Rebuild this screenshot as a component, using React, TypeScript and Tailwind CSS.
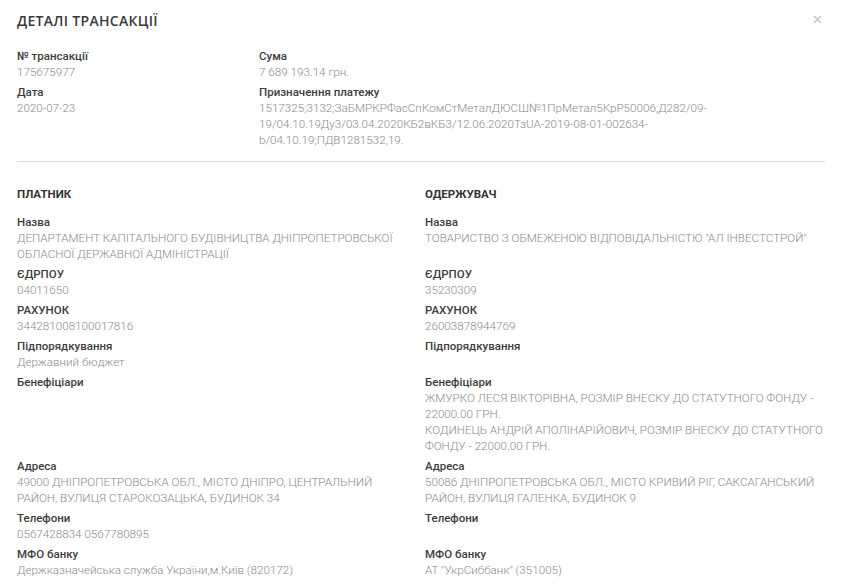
const labelFont = { fontFamily: 'Roboto, "Liberation Sans", sans-serif' };

type F = { label: string; lines?: string[] };

const Field = ({ label, lines = [] }: F) => (
  <div className="flex flex-col" style={labelFont}>
    <span className="text-[11.5px] leading-[15px] font-medium text-[#3d3d3d]">{label}</span>
    {lines.map((l, i) => (
      <span key={i} className="whitespace-nowrap text-[11.65px] leading-[16px] font-light text-[#8a8a8a]">
        {l}
      </span>
    ))}
  </div>
);

const payer: F[] = [
  { label: "Назва", lines: ["ДЕПАРТАМЕНТ КАПІТАЛЬНОГО БУДІВНИЦТВА ДНІПРОПЕТРОВСЬКОЇ", "ОБЛАСНОЇ ДЕРЖАВНОЇ АДМІНІСТРАЦІЇ"] },
  { label: "ЄДРПОУ", lines: ["04011650"] },
  { label: "РАХУНОК", lines: ["344281008100017816"] },
  { label: "Підпорядкування", lines: ["Державний бюджет"] },
  { label: "Бенефіціари" },
  { label: "Адреса", lines: ["49000 ДНІПРОПЕТРОВСЬКА ОБЛ., МІСТО ДНІПРО, ЦЕНТРАЛЬНИЙ", "РАЙОН, ВУЛИЦЯ СТАРОКОЗАЦЬКА, БУДИНОК 34"] },
  { label: "Телефони", lines: ["0567428834 0567780895"] },
  { label: "МФО банку", lines: ["Держказначейська служба України,м.Київ (820172)"] },
];

const receiver: F[] = [
  { label: "Назва", lines: ['ТОВАРИСТВО З ОБМЕЖЕНОЮ ВІДПОВІДАЛЬНІСТЮ "АЛ ІНВЕСТСТРОЙ"'] },
  { label: "ЄДРПОУ", lines: ["35230309"] },
  { label: "РАХУНОК", lines: ["26003878944769"] },
  { label: "Підпорядкування" },
  {
    label: "Бенефіціари",
    lines: [
      "ЖМУРКО ЛЕСЯ ВІКТОРІВНА, РОЗМІР ВНЕСКУ ДО СТАТУТНОГО ФОНДУ -",
      "22000.00 ГРН.",
      "КОДИНЕЦЬ АНДРІЙ АПОЛІНАРІЙОВИЧ, РОЗМІР ВНЕСКУ ДО СТАТУТНОГО",
      "ФОНДУ - 22000.00 ГРН.",
    ],
  },
  { label: "Адреса", lines: ["50086 ДНІПРОПЕТРОВСЬКА ОБЛ., МІСТО КРИВИЙ РІГ, САКСАГАНСЬКИЙ", "РАЙОН, ВУЛИЦЯ ГАЛЕНКА, БУДИНОК 9"] },
  { label: "Телефони" },
  { label: "МФО банку", lines: ['АТ "УкрСиббанк" (351005)'] },
];

const App = () => {
  return (
    <div className="min-h-[588px] w-[845px] bg-white pl-[17px] pr-[20px] pt-[10px]">
      <div className="flex h-[20px] items-center justify-between">
        <span
          className="text-[14px] font-semibold tracking-[0.3px] text-[#3a3a3a]"
          style={{ fontFamily: '"Open Sans", sans-serif' }}
        >
          ДЕТАЛІ ТРАНСАКЦІЇ
        </span>
        <svg width="9" height="9" viewBox="0 0 9 9" className="mr-[3px] -mt-[1px]">
          <path d="M1 1L8 8M8 1L1 8" stroke="#c6c6c6" strokeWidth="1.6" />
        </svg>
      </div>

      <div className="mt-[19px] grid grid-cols-[242px_1fr] gap-y-[5px]">
        <Field label="№ трансакції" lines={["175675977"]} />
        <Field label="Сума" lines={["7 689 193.14 грн."]} />
        <Field label="Дата" lines={["2020-07-23"]} />
        <Field
          label="Призначення платежу"
          lines={[
            "1517325;3132;ЗаБМРКРФасСпКомСтМеталДЮСШ№1ПрМетал5КрР50006;Д282/09-",
            "19/04.10.19Ду3/03.04.2020КБ2вКБ3/12.06.2020ТзUA-2019-08-01-002634-",
            "b/04.10.19;ПДВ1281532,19.",
          ]}
        />
      </div>

      <div className="mt-[13px] h-px bg-[#dedede]" />

      <div className="mt-[24px] grid grid-cols-2 gap-x-[8px] gap-y-[5px]" style={labelFont}>
        <span className="mb-[8px] text-[11.5px] leading-[16px] font-bold text-[#333]">ПЛАТНИК</span>
        <span className="mb-[8px] text-[11.5px] leading-[16px] font-bold text-[#333]">ОДЕРЖУВАЧ</span>
        {payer.map((p, i) => [
          <Field key={"p" + i} {...p} />,
          <Field key={"r" + i} {...receiver[i]} />,
        ])}
      </div>
    </div>
  );
};

export default App;
